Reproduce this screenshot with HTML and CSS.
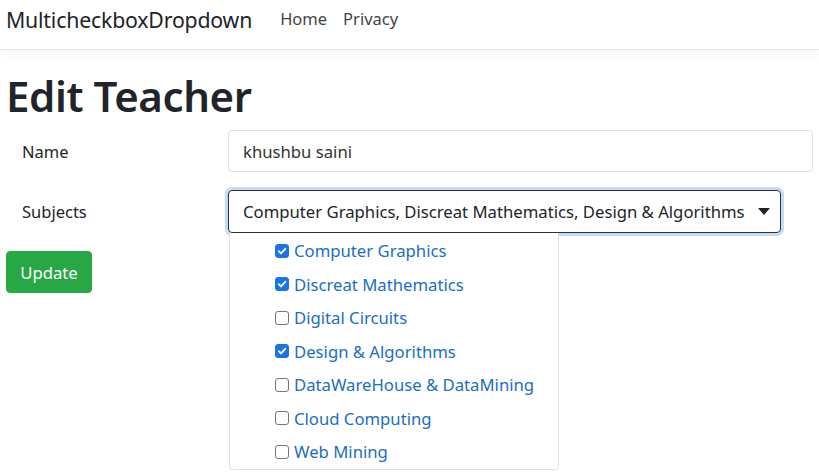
FILE: index.html
```html
<!DOCTYPE html>
<html>
<head>
<meta charset="utf-8">
<link rel="stylesheet" href="styles.css">
</head>
<body>
<header class="navbar">
  <span class="brand">MulticheckboxDropdown</span>
  <nav class="nav">
    <span class="nav-link">Home</span>
    <span class="nav-link">Privacy</span>
  </nav>
</header>
<main class="main">
  <h1 class="title">Edit Teacher</h1>
  <div class="form-row">
    <label class="label">Name</label>
    <div class="input">khushbu saini</div>
  </div>
  <div class="form-row row-subjects">
    <label class="label">Subjects</label>
    <div class="select-wrap">
      <div class="select">
        <span>Computer Graphics, Discreat Mathematics, Design &amp; Algorithms</span>
        <span class="caret"></span>
      </div>
      <ul class="menu">
        <li class="item"><span class="cb checked"><svg viewBox="0 0 14 14"><path d="M3.2 7.2l2.6 2.6 5-5.4" fill="none" stroke="#fff" stroke-width="2.2" stroke-linecap="round" stroke-linejoin="round"/></svg></span>Computer Graphics</li>
        <li class="item"><span class="cb checked"><svg viewBox="0 0 14 14"><path d="M3.2 7.2l2.6 2.6 5-5.4" fill="none" stroke="#fff" stroke-width="2.2" stroke-linecap="round" stroke-linejoin="round"/></svg></span>Discreat Mathematics</li>
        <li class="item"><span class="cb"></span>Digital Circuits</li>
        <li class="item"><span class="cb checked"><svg viewBox="0 0 14 14"><path d="M3.2 7.2l2.6 2.6 5-5.4" fill="none" stroke="#fff" stroke-width="2.2" stroke-linecap="round" stroke-linejoin="round"/></svg></span>Design &amp; Algorithms</li>
        <li class="item"><span class="cb"></span>DataWareHouse &amp; DataMining</li>
        <li class="item"><span class="cb"></span>Cloud Computing</li>
        <li class="item"><span class="cb"></span>Web Mining</li>
      </ul>
    </div>
  </div>
  <button class="btn">Update</button>
</main>
</body>
</html>
```

FILE: styles.css
```css
* { box-sizing: border-box; }
html, body { margin: 0; padding: 0; }
body {
  font-family: "Noto Sans", "Open Sans", sans-serif;
  color: #212529;
  background: #fff;
  width: 819px;
  height: 474px;
  overflow: hidden;
}
.navbar {
  height: 50px;
  display: flex;
  align-items: center;
  padding: 0 6px;
  border-bottom: 1px solid #e5e5e5;
  box-shadow: 0 4px 12px rgba(0,0,0,0.04);
}
.brand {
  font-size: 21.3px;
  color: #212529;
  margin-top: -10px;
  letter-spacing: -0.2px;
}
.nav {
  display: flex;
  gap: 16px;
  margin-left: 28px;
  margin-top: -12px;
}
.nav-link {
  font-size: 16.5px;
  color: #444;
}
.main {
  padding: 0 6px;
}
.title {
  margin: 22px 0 0;
  font-size: 42px;
  font-weight: 600;
  line-height: 48px;
  letter-spacing: -0.4px;
}
.form-row {
  display: flex;
  align-items: center;
  margin-top: 10px;
}
.row-subjects {
  margin-top: 18px;
  align-items: flex-start;
}
.label {
  width: 222px;
  padding-left: 16px;
  font-size: 16.5px;
}
.row-subjects .label {
  line-height: 43px;
}
.input {
  width: 585px;
  height: 42px;
  border: 1px solid #dcdfe3;
  border-radius: 4px;
  padding: 0 14px;
  display: flex;
  align-items: center;
  font-size: 16.7px;
  color: #333;
}
.select-wrap {
  position: relative;
  width: 553px;
}
.select {
  height: 43px;
  border: 1px solid #2e3338;
  border-radius: 4px;
  box-shadow: 0 0 0 3px #c5dcf5;
  padding: 0 10px 0 14px;
  display: flex;
  align-items: center;
  justify-content: space-between;
  font-size: 16.7px;
  color: #212529;
  white-space: nowrap;
}
.caret {
  width: 0;
  height: 0;
  border-left: 6px solid transparent;
  border-right: 6px solid transparent;
  border-top: 7px solid #222;
}
.menu {
  position: absolute;
  left: 1px;
  top: 43px;
  width: 330px;
  margin: 0;
  padding: 1px 0 0 45px;
  list-style: none;
  background: #fff;
  border: 1px solid #dee2e6;
  border-top: none;
  border-radius: 0 0 4px 4px;
  z-index: 2;
}
.item {
  height: 33.5px;
  display: flex;
  align-items: center;
  font-size: 16.7px;
  color: #1b6ec2;
}
.cb {
  width: 14px;
  height: 14px;
  border: 1px solid #767676;
  border-radius: 3px;
  margin-right: 5px;
  display: inline-flex;
  background: #fff;
}
.cb.checked {
  background: #1a73e8;
  border-color: #1a73e8;
}
.cb svg { width: 100%; height: 100%; }
.btn {
  margin-top: 18px;
  width: 86px;
  height: 42px;
  background: #28a745;
  border: 1px solid #28a745;
  border-radius: 4px;
  color: #fff;
  font-family: inherit;
  font-size: 16.7px;
  padding: 0;
}
```
